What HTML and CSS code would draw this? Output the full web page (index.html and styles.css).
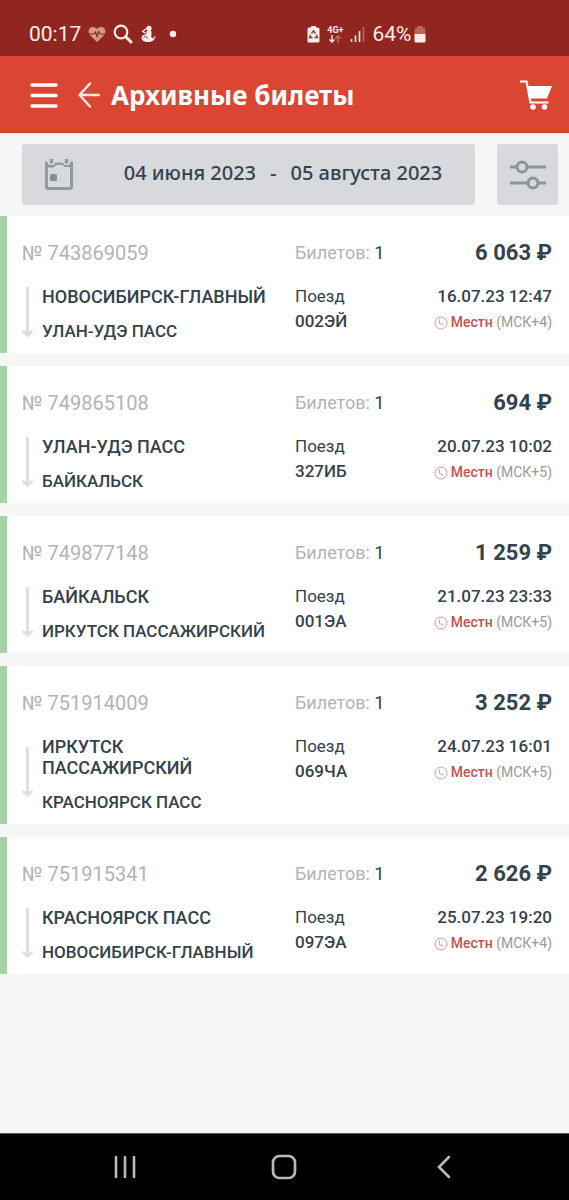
FILE: index.html
```html
<!DOCTYPE html>
<html lang="ru">
<head>
<meta charset="utf-8">
<meta name="viewport" content="width=device-width, initial-scale=1">
<title>Архивные билеты</title>
<link rel="stylesheet" href="styles.css">
</head>
<body>
<svg class="defs" width="0" height="0" aria-hidden="true">
  <symbol id="route-arrow" viewBox="0 0 11 51">
    <path d="M5.500 1V47M1.500 44.500L5.500 48.500L9.500 44.500" fill="none" stroke="currentColor" stroke-width="2.800" stroke-linecap="round" stroke-linejoin="round"/>
  </symbol>
  <symbol id="clock" viewBox="0 0 14 14">
    <circle cx="7" cy="7" r="6" fill="none" stroke="currentColor"/>
    <path d="M5.500 3.500V7.500L9.500 9" fill="none" stroke="currentColor"/>
  </symbol>
</svg>

<div class="status">
  <div class="status-left">
    <span class="status-text">00:17</span>
    <svg width="18" height="17" viewBox="0 0 18 17"><path d="M9 16L2.200 9.300C-1 5.500 1 1 5 1C7 1 8.300 2 9 3.200C9.700 2 11 1 13 1C17 1 19 5.500 15.800 9.300Z" fill="#dc9b78"/><path d="M1 8H6L7.500 6L9 10.500L10.700 5.500L12 8H17" fill="none" stroke="#7c3226" stroke-width="1.200"/></svg>
    <svg width="20" height="20" viewBox="0 0 20 20" fill="none" stroke="#fdeeec" stroke-linecap="round"><circle cx="8" cy="8" r="6.300" stroke-width="2.200"/><path d="M13 13L18 18" stroke-width="3"/></svg>
    <svg class="figure" width="16" height="18" viewBox="0 0 16 18"><circle cx="9" cy="3.300" r="2.600" fill="#fdeeec"/><path d="M7 5.500L11 5.500C12 8 11.500 10 11 12L13.500 13.500L14.500 11L15.500 11.500C15 15 12 17 8 17C4 17 1.500 15.500 1.500 12.500C1.500 10.500 3.500 9.500 6 9.500Z" fill="#fdeeec"/><path d="M6.500 3.500L2.500 6.500L6 8.500" fill="none" stroke="#fdeeec" stroke-width="1.200"/><path d="M3.500 12.500C5 11 7 11.500 7.500 13.500" fill="none" stroke="#912620"/></svg>
    <svg width="8" height="8" viewBox="0 0 8 8"><circle cx="4" cy="4" r="3.200" fill="#fdeeec"/></svg>
  </div>
  <div class="status-right">
    <svg width="13" height="18" viewBox="0 0 13 18"><path d="M2 2.500H4V1H9V2.500H11Q12.500 2.500 12.500 4V16Q12.500 17.500 11 17.500H2Q.5 17.500 .5 16V4Q.5 2.500 2 2.500Z" fill="#fdeeec"/><path d="M4.500 8.500L6.500 5.800L8.500 8.500M9.300 9.700L10.500 12.500H7.500M5.500 12.500H2.500L3.700 9.700" fill="none" stroke="#7c3226" stroke-width="1.300"/></svg>
    <div class="network"><span>4G+</span><svg width="12" height="8" viewBox="0 0 12 8" fill="none" stroke-width="1.300"><path d="M3 0V7M.5 4.500L3 7L5.500 4.500" stroke="#fdeeec"/><path d="M9 8V1M6.500 3.500L9 1L11.500 3.500" stroke="#c2756d"/></svg></div>
    <svg width="15" height="17" viewBox="0 0 15 17" fill="none" stroke="#fdeeec" stroke-width="1.600"><path d="M1.500 13V16M5.500 9.500V16M9.500 5V16"/><path d="M13.500 1V16" stroke="#b8665f"/></svg>
    <span class="status-text percent">64%</span>
    <svg width="12" height="18" viewBox="0 0 12 18"><path d="M.5 9V4.500Q.5 3 2 3H3V1H9V3H10Q11.500 3 11.500 4.500V9Z" fill="#b8665f"/><path d="M.5 9H11.500V16Q11.500 17.500 10 17.500H2Q.5 17.500 .5 16Z" fill="#fdeeec"/></svg>
  </div>
</div>

<header class="header">
  <button class="icon-button" aria-label="Меню"><svg width="28" height="27" viewBox="0 0 28 27" stroke="#fff" stroke-width="3.500" stroke-linecap="round"><path d="M2 3H26M2 13.500H26M2 24H26"/></svg></button>
  <button class="icon-button back" aria-label="Назад"><svg width="23" height="26" viewBox="0 0 23 26" fill="none" stroke="#ffe9e5" stroke-width="2.400" stroke-linecap="round" stroke-linejoin="round"><path d="M12 1.500L1.500 13L12 24.500M1.500 13H21"/></svg></button>
  <h1 class="title">Архивные билеты</h1>
  <button class="icon-button cart" aria-label="Корзина"><svg width="34" height="30" viewBox="0 0 34 30"><path d="M1 1.500H7.500L11.500 22.500H29.500" fill="none" stroke="#fff" stroke-width="2.200"/><path d="M8 6H33L28 18.500H11Z" fill="#fff"/><circle cx="14" cy="27" r="2.800" fill="#fff"/><circle cx="25.500" cy="27" r="2.800" fill="#fff"/></svg></button>
</header>

<section class="filters">
  <button class="period">
    <svg width="31" height="32" viewBox="0 0 31 32"><path d="M2.500 4V28Q2.500 29.500 4 29.500H26Q27.500 29.500 27.500 28V4" fill="none" stroke="#9199a0" stroke-width="3"/><path d="M1 2.500H3.500Q3.500 6 6.500 6H8.500Q11 6 11 3.500H19Q19 6 21.500 6H24Q26.500 6 26.500 2.500H29V8H20.500L18.500 6H12L10 8.500H1Z" fill="#9199a0"/><path d="M7.500 0V4.500M22.500 0V4.500" stroke="#9199a0" stroke-width="3.400"/><rect x="6" y="15" width="7" height="7" rx="1.500" fill="#858e96"/></svg>
    <span class="dates"><span>04 июня 2023</span><span>-</span><span>05 августа 2023</span></span>
  </button>
  <button class="settings" aria-label="Фильтр"><svg width="36" height="30" viewBox="0 0 36 30" fill="none" stroke="#8b949b" stroke-width="3"><path d="M0 7H7M17 7H36M0 23H18M28 23H36"/><circle cx="12" cy="7" r="5"/><circle cx="23" cy="23" r="5"/></svg></button>
</section>

<main class="tickets">
  <article class="card">
    <div class="number">№ 743869059</div><div class="count">Билетов: <b>1</b></div><div class="price">6 063 ₽</div>
    <div class="route"><svg class="arrow"><use href="#route-arrow"/></svg><div class="stations"><div class="from">НОВОСИБИРСК-ГЛАВНЫЙ</div><div class="to">УЛАН-УДЭ ПАСС</div></div></div>
    <div class="train">Поезд<b>002ЭЙ</b></div>
    <div class="departure"><time>16.07.23 12:47</time><div class="zone"><svg class="clock"><use href="#clock"/></svg><span><b>Местн</b> (МСК+4)</span></div></div>
  </article>
  <article class="card">
    <div class="number">№ 749865108</div><div class="count">Билетов: <b>1</b></div><div class="price">694 ₽</div>
    <div class="route"><svg class="arrow"><use href="#route-arrow"/></svg><div class="stations"><div class="from">УЛАН-УДЭ ПАСС</div><div class="to">БАЙКАЛЬСК</div></div></div>
    <div class="train">Поезд<b>327ИБ</b></div>
    <div class="departure"><time>20.07.23 10:02</time><div class="zone"><svg class="clock"><use href="#clock"/></svg><span><b>Местн</b> (МСК+5)</span></div></div>
  </article>
  <article class="card">
    <div class="number">№ 749877148</div><div class="count">Билетов: <b>1</b></div><div class="price">1 259 ₽</div>
    <div class="route"><svg class="arrow"><use href="#route-arrow"/></svg><div class="stations"><div class="from">БАЙКАЛЬСК</div><div class="to">ИРКУТСК ПАССАЖИРСКИЙ</div></div></div>
    <div class="train">Поезд<b>001ЭА</b></div>
    <div class="departure"><time>21.07.23 23:33</time><div class="zone"><svg class="clock"><use href="#clock"/></svg><span><b>Местн</b> (МСК+5)</span></div></div>
  </article>
  <article class="card">
    <div class="number">№ 751914009</div><div class="count">Билетов: <b>1</b></div><div class="price">3 252 ₽</div>
    <div class="route"><svg class="arrow"><use href="#route-arrow"/></svg><div class="stations"><div class="from">ИРКУТСК ПАССАЖИРСКИЙ</div><div class="to">КРАСНОЯРСК ПАСС</div></div></div>
    <div class="train">Поезд<b>069ЧА</b></div>
    <div class="departure"><time>24.07.23 16:01</time><div class="zone"><svg class="clock"><use href="#clock"/></svg><span><b>Местн</b> (МСК+5)</span></div></div>
  </article>
  <article class="card">
    <div class="number">№ 751915341</div><div class="count">Билетов: <b>1</b></div><div class="price">2 626 ₽</div>
    <div class="route"><svg class="arrow"><use href="#route-arrow"/></svg><div class="stations"><div class="from">КРАСНОЯРСК ПАСС</div><div class="to">НОВОСИБИРСК-ГЛАВНЫЙ</div></div></div>
    <div class="train">Поезд<b>097ЭА</b></div>
    <div class="departure"><time>25.07.23 19:20</time><div class="zone"><svg class="clock"><use href="#clock"/></svg><span><b>Местн</b> (МСК+4)</span></div></div>
  </article>
</main>

<nav class="system-nav">
  <button class="icon-button" aria-label="Недавние"><svg width="24" height="24" viewBox="0 0 24 24" stroke="#b9b9b9" stroke-width="2.600" stroke-linecap="round"><path d="M3 2V22M12 2V22M21 2V22"/></svg></button>
  <button class="icon-button" aria-label="Главный экран"><svg width="26" height="26" viewBox="0 0 26 26"><rect x="2" y="2" width="22" height="22" rx="6.500" fill="none" stroke="#b9b9b9" stroke-width="2.700"/></svg></button>
  <button class="icon-button" aria-label="Назад"><svg width="16" height="24" viewBox="0 0 16 24"><path d="M13 2L3 12L13 22" fill="none" stroke="#b9b9b9" stroke-width="2.600" stroke-linecap="round"/></svg></button>
</nav>
</body>
</html>
```
FILE: styles.css
```css
* { box-sizing: border-box; }
body {
  margin: 0;
  min-height: 100vh;
  display: flex;
  flex-direction: column;
  background: #f6f6f6;
  color: #34424e;
  font-family: Roboto, "Liberation Sans", sans-serif;
}
svg { display: block; flex: none; }
b { font-weight: 500; }
button { margin: 0; padding: 0; border: 0; background: none; font: inherit; color: inherit; }
.defs { position: absolute; }

.status {
  display: grid;
  grid-template-columns: 54fr 46fr;
  height: 56px;
  padding-top: 12px;
  background: #912620;
  color: #fdeeec;
}
.status-left, .status-right { display: flex; align-items: center; }
.status-left { gap: 7px; padding-left: 29px; }
.status-left .figure { margin-right: 6px; }
.status-right { gap: 7px; }
.status-text { font-size: 21px; }
.percent { margin-right: -4px; }
.network { display: flex; flex-direction: column; align-items: center; font-size: 9px; line-height: 9px; font-weight: 700; }

.header {
  display: flex;
  align-items: center;
  height: 77px;
  padding: 2px 16px 0 30px;
  background: #db4534;
  border-bottom: 1px solid #c73d2c;
  color: #fff;
}
.back { margin: 0 10px 0 20px; }
.title { margin: 0; font: 700 26px/36px "Noto Sans", sans-serif; white-space: nowrap; }
.cart { margin-left: auto; }

.filters { display: flex; gap: 22px; padding: 11px 11px 11px 22px; }
.period, .settings { height: 61px; border-radius: 3px; background: #d7d9dd; }
.period { display: flex; align-items: center; flex: 1; padding-left: 22px; }
.dates {
  display: flex;
  flex: 1;
  justify-content: center;
  gap: 14px;
  padding-bottom: 4px;
  padding-left: 16px;
  font: 500 20px/26px "Noto Sans", sans-serif;
  white-space: nowrap;
}
.settings { display: flex; align-items: center; justify-content: center; width: 61px; }

.tickets { display: flex; flex-direction: column; gap: 13px; flex: 1; }
.card {
  display: grid;
  grid-template-columns: 34fr 13fr 19fr;
  row-gap: 20px;
  padding: 24px 17px 11px 15px;
  border-left: 7px solid #a6d3a5;
  background: #fff;
}
.number, .count, .price { line-height: 26px; white-space: nowrap; }
.number { font-size: 20px; color: #b0b3b7; }
.count { font-size: 18px; color: #b0b3b7; }
.count b { color: #34424e; font-weight: 400; }
.price { font-size: 22px; font-weight: 700; text-align: right; }
.route { display: flex; align-items: center; gap: 9px; padding-right: 20px; }
.arrow { width: 11px; height: 51px; margin-bottom: 4px; color: #dcdee2; }
.from { font-size: 18px; line-height: 21px; font-weight: 500; }
.to { margin-top: 14px; font-size: 17px; line-height: 21px; font-weight: 500; }
.train { font-size: 17px; line-height: 21px; }
.train b { display: block; margin-top: 4px; }
.departure { text-align: right; white-space: nowrap; font-size: 17px; line-height: 21px; font-weight: 500; }
.departure time { display: block; }
.zone { display: flex; align-items: center; justify-content: flex-end; gap: 3px; margin-top: 5px; font-size: 14px; font-weight: 400; color: #999; }
.zone b { color: #c25450; }
.clock { width: 14px; height: 14px; color: #d99a98; }

.system-nav {
  display: grid;
  grid-template-columns: repeat(3, 1fr);
  height: 67px;
  padding: 0 45px;
  background: #000;
  border-top: 1px solid #555;
}
.system-nav .icon-button { display: flex; align-items: center; justify-content: center; }
```
